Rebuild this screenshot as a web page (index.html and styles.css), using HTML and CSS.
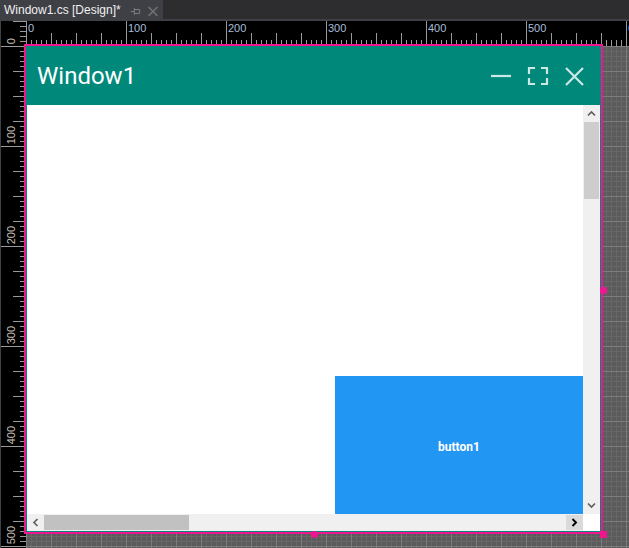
FILE: index.html
```html
<!DOCTYPE html>
<html>
<head>
<meta charset="utf-8">
<title>Window1.cs [Design]</title>
<link rel="stylesheet" href="styles.css">
</head>
<body>
<div class="ide">
  <div class="tabbar">
    <div class="tab">
      <span class="tab-title">Window1.cs [Design]*</span>
      <svg class="tab-icons" width="40" height="19" viewBox="0 0 40 19">
        <path d="M7 11.5H10.5M10.5 8V15M10.5 9.5H16V13.5H10.5" fill="none" stroke="#808080" stroke-width="1"/>
        <path d="M25 7L34 16M34 7L25 16" fill="none" stroke="#707070" stroke-width="1.6"/>
      </svg>
    </div>
  </div>
  <div class="designer">
    <div class="vruler">
      <div class="vcell first"><span class="vl">0</span></div>
      <div class="vcell"><span class="vl">100</span></div>
      <div class="vcell"><span class="vl">200</span></div>
      <div class="vcell"><span class="vl">300</span></div>
      <div class="vcell"><span class="vl">400</span></div>
      <div class="vcell"><span class="vl">500</span></div>
    </div>
    <div class="hruler">
      <span class="hl">0</span>
      <span class="hl">100</span>
      <span class="hl">200</span>
      <span class="hl">300</span>
      <span class="hl">400</span>
      <span class="hl">500</span>
      <span class="hl">600</span>
    </div>
    <div class="canvas">
      <div class="window">
        <div class="titlebar">
          <span class="title">Window1</span>
          <svg class="caption" width="93" height="20" viewBox="0 0 93 20">
            <path d="M0 10H20" fill="none" stroke="rgba(255,255,255,0.8)" stroke-width="2.2"/>
            <path d="M38 8V2H44M50 2H56V8M56 12V18H50M44 18H38V12" fill="none" stroke="rgba(255,255,255,0.8)" stroke-width="2.2"/>
            <path d="M75 2L92 19M92 2L75 19" fill="none" stroke="rgba(255,255,255,0.8)" stroke-width="2.2"/>
          </svg>
        </div>
        <div class="client">
          <div class="viewport">
            <div class="button1">button1</div>
          </div>
          <div class="vscroll">
            <div class="sbtn">
              <svg width="9" height="9" viewBox="0 0 9 9"><path d="M1 6.5L4.5 3L8 6.5" fill="none" stroke="#606060" stroke-width="1.7"/></svg>
            </div>
            <div class="vthumb"></div>
            <div class="fill"></div>
            <div class="sbtn">
              <svg width="9" height="9" viewBox="0 0 9 9"><path d="M1 2.5L4.5 6L8 2.5" fill="none" stroke="#606060" stroke-width="1.7"/></svg>
            </div>
          </div>
          <div class="hscroll">
            <div class="sbtn">
              <svg width="9" height="9" viewBox="0 0 9 9"><path d="M6.5 1L3 4.5L6.5 8" fill="none" stroke="#606060" stroke-width="1.7"/></svg>
            </div>
            <div class="hthumb"></div>
            <div class="fill"></div>
            <div class="sbtn hot">
              <svg width="9" height="9" viewBox="0 0 9 9"><path d="M2.5 1L6 4.5L2.5 8" fill="none" stroke="#000000" stroke-width="1.9"/></svg>
            </div>
          </div>
          <div class="sizegrip"></div>
        </div>
        <span class="handle h-bottom"></span>
        <span class="handle h-right"></span>
        <span class="handle h-corner"></span>
      </div>
    </div>
  </div>
</div>
</body>
</html>
```
FILE: styles.css
```css
html, body {
  margin: 0;
  padding: 0;
}
body {
  width: 629px;
  height: 548px;
  overflow: hidden;
  background: #2d2d30;
  font-family: "Liberation Sans", Arial, sans-serif;
}
.ide {
  display: flex;
  flex-direction: column;
  width: 629px;
  height: 548px;
}
.tabbar {
  height: 19px;
  border-bottom: 2px solid #3f3f46;
  background: #2d2d30;
  display: flex;
  flex-shrink: 0;
}
.tab {
  width: 163px;
  background: #3f3f46;
  display: flex;
  align-items: flex-start;
  padding-left: 4px;
  box-sizing: border-box;
}
.tab-title {
  color: #f1f1f1;
  font-size: 12px;
  line-height: 19px;
  padding-top: 1px;
  white-space: nowrap;
}
.tab-icons {
  margin-left: 3px;
  display: block;
}
.designer {
  flex: 1;
  display: grid;
  grid-template-columns: 26px 603px;
  grid-template-rows: 25px 502px;
  overflow: hidden;
}
.vruler {
  grid-row: 1 / 3;
  grid-column: 1;
  box-sizing: border-box;
  border-left: 1px solid #3f3f46;
  background-color: #000;
  background-image:
    linear-gradient(to bottom, #9a9a9a 1px, transparent 1px),
    linear-gradient(to bottom, #9a9a9a 1px, transparent 1px),
    linear-gradient(to bottom, #9a9a9a 1px, transparent 1px);
  background-size: 6px 5px, 13px 25px, 100% 100px;
  background-repeat: repeat-y, repeat-y, repeat-y;
  background-position: right 0 top 0, right 0 top 0, left 0 top 25px;
  display: flex;
  flex-direction: column;
  overflow: hidden;
}
.vcell {
  height: 100px;
  flex-shrink: 0;
  display: flex;
  align-items: flex-end;
  padding-left: 5px;
  padding-bottom: 2px;
  box-sizing: border-box;
}
.vcell.first {
  margin-top: -75px;
}
.vl {
  writing-mode: vertical-rl;
  transform: rotate(180deg);
  font-size: 11px;
  line-height: 11px;
  color: #c4bfb4;
}
.hruler {
  grid-row: 1;
  grid-column: 2;
  background-color: #000;
  background-image:
    linear-gradient(to right, #9a9a9a 1px, transparent 1px),
    linear-gradient(to right, #9a9a9a 1px, transparent 1px),
    linear-gradient(to right, #9a9a9a 1px, transparent 1px);
  background-size: 5px 6px, 25px 13px, 100px 100%;
  background-repeat: repeat-x, repeat-x, repeat-x;
  background-position: left 0 bottom 0, left 0 bottom 0, left 0 top 0;
  display: flex;
  overflow: hidden;
}
.hl {
  width: 100px;
  flex-shrink: 0;
  box-sizing: border-box;
  padding-left: 2px;
  padding-top: 2px;
  font-size: 11px;
  line-height: 11px;
  color: #a9bdd8;
}
.canvas {
  grid-row: 2;
  grid-column: 2;
  background-color: #5b5b5b;
  background-image:
    linear-gradient(to right, #7d7d7d 1px, transparent 1px),
    linear-gradient(to bottom, #7d7d7d 1px, transparent 1px),
    linear-gradient(to right, #676767 1px, transparent 1px),
    linear-gradient(to bottom, #676767 1px, transparent 1px);
  background-size: 25px 25px, 25px 25px, 5px 5px, 5px 5px;
}
.window {
  position: relative;
  z-index: 1;
  width: 575px;
  height: 486px;
  box-sizing: border-box;
  border: 1px solid #00897b;
  outline: 2px solid #f0168f;
  background: #fff;
  display: flex;
  flex-direction: column;
}
.titlebar {
  height: 58px;
  flex-shrink: 0;
  background: #00897b;
  display: flex;
  align-items: center;
  padding-left: 10px;
  padding-right: 16px;
}
.title {
  font-family: Roboto, "Liberation Sans", sans-serif;
  font-size: 24px;
  color: #fff;
  line-height: 28px;
}
.caption {
  margin-left: auto;
  display: block;
}
.client {
  flex: 1;
  display: grid;
  grid-template-columns: 556px 17px;
  grid-template-rows: 409px 17px;
}
.viewport {
  position: relative;
  overflow: hidden;
  background: #fff;
}
.button1 {
  position: absolute;
  left: 308px;
  top: 271px;
  width: 248px;
  height: 138px;
  box-sizing: border-box;
  padding-top: 3px;
  background: #2196f3;
  color: #fff;
  font-family: Roboto, "Liberation Sans", sans-serif;
  font-weight: bold;
  font-size: 12px;
  display: flex;
  align-items: center;
  justify-content: center;
}
.vscroll {
  background: #f0f0f0;
  display: flex;
  flex-direction: column;
}
.hscroll {
  background: #f0f0f0;
  display: flex;
}
.sbtn {
  width: 17px;
  height: 17px;
  flex-shrink: 0;
  display: flex;
  align-items: center;
  justify-content: center;
}
.sbtn svg {
  display: block;
}
.sbtn.hot {
  background: #dadada;
  height: 15px;
  margin-top: 1px;
}
.fill {
  flex: 1;
}
.vthumb {
  height: 77px;
  margin: 0 1px;
  background: #cdcdcd;
}
.hthumb {
  width: 145px;
  margin: 1px 0;
  background: #c1c1c1;
}
.sizegrip {
  background: #fff;
}
.handle {
  position: absolute;
  width: 7px;
  height: 7px;
  background: #f0168f;
}
.h-bottom {
  left: 284px;
  top: 484px;
  border-radius: 50%;
}
.h-right {
  left: 573px;
  top: 240px;
  border-radius: 2px;
}
.h-corner {
  left: 573px;
  top: 484px;
}
```
